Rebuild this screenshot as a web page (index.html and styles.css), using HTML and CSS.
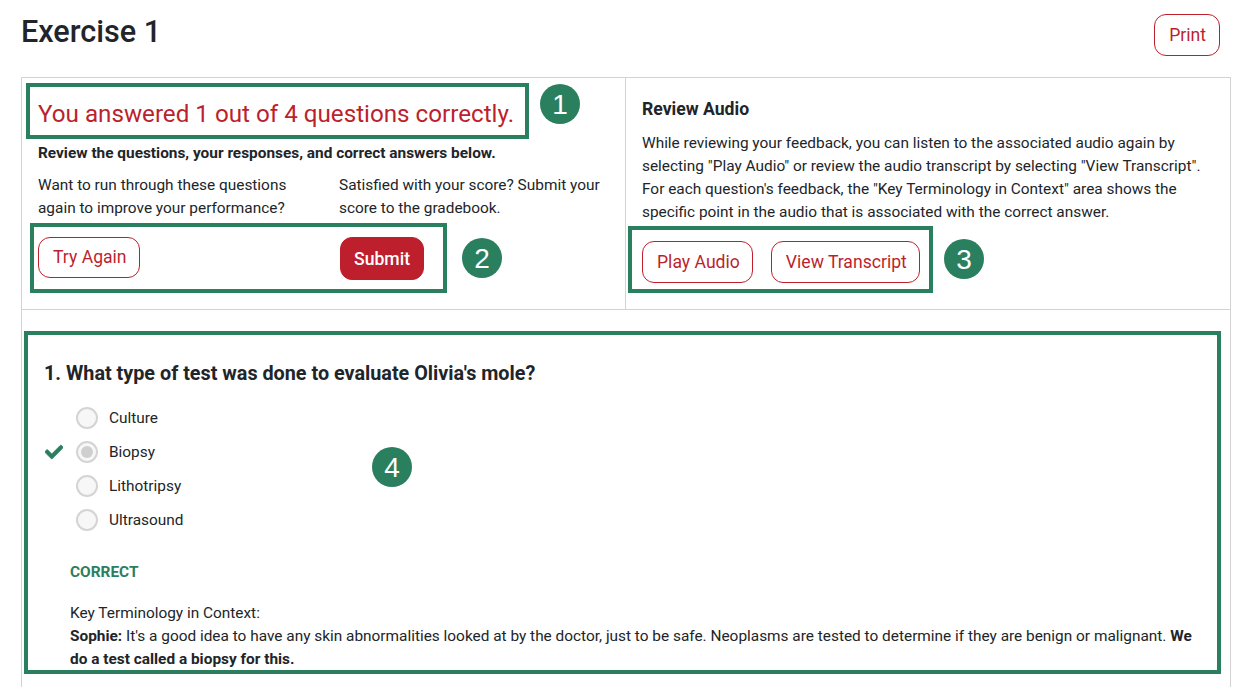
FILE: index.html
```html
<!DOCTYPE html>
<html lang="en">
  <head>
    <meta charset="UTF-8" />
    <meta name="viewport" content="width=device-width, initial-scale=1.0" />
    <title>Exercise 1</title>
    <link rel="stylesheet" href="styles.css">
  </head>
  <body>
    <div class="page">
      <div class="page-header">
        <h1>Exercise 1</h1>
        <button class="btn btn-print">Print</button>
      </div>

      <div class="panel">
        <div class="summary">
          <div class="score-cell">
            <h2 class="score">You answered 1 out of 4 questions correctly.</h2>
            <p class="review-note">Review the questions, your responses, and correct answers below.</p>
            <div class="choices">
              <div class="choice">
                <p>Want to run through these questions again to improve your performance?</p>
                <button class="btn btn-try">Try Again</button>
              </div>
              <div class="choice">
                <p>Satisfied with your score? Submit your score to the gradebook.</p>
                <button class="btn btn-solid">Submit</button>
              </div>
            </div>
          </div>
          <div class="audio-cell">
            <h3>Review Audio</h3>
            <p>While reviewing your feedback, you can listen to the associated audio again by selecting "Play Audio" or review the audio transcript by selecting "View Transcript". For each question's feedback, the "Key Terminology in Context" area shows the specific point in the audio that is associated with the correct answer.</p>
            <div class="audio-buttons">
              <button class="btn">Play Audio</button>
              <button class="btn">View Transcript</button>
            </div>
          </div>
        </div>

        <div class="question">
          <h3>1. What type of test was done to evaluate Olivia's mole?</h3>
          <ul class="options">
            <li><span class="radio"></span>Culture</li>
            <li>
              <svg class="check" viewBox="0 0 512 512"><path d="M173.898 439.404l-166.4-166.4c-9.997-9.997-9.997-26.206 0-36.204l36.203-36.204c9.997-9.998 26.207-9.998 36.204 0L192 312.69 432.095 72.596c9.997-9.997 26.207-9.997 36.204 0l36.203 36.204c9.997 9.997 9.997 26.206 0 36.204l-294.4 294.401c-9.998 9.997-26.207 9.997-36.204-.001z"/></svg>
              <span class="radio radio-on"></span>Biopsy
            </li>
            <li><span class="radio"></span>Lithotripsy</li>
            <li><span class="radio"></span>Ultrasound</li>
          </ul>
          <div class="feedback">
            <div class="correct">CORRECT</div>
            <p>Key Terminology in Context:<br><b>Sophie:</b> It's a good idea to have any skin abnormalities looked at by the doctor, just to be safe. Neoplasms are tested to determine if they are benign or malignant. <b>We do a test called a biopsy for this.</b></p>
          </div>
        </div>
      </div>

      <!-- callouts drawn on top of the screenshot -->
      <div class="callout callout-1"></div>
      <div class="callout callout-2"></div>
      <div class="callout callout-3"></div>
      <div class="callout callout-4"></div>
      <div class="badge badge-1">1</div>
      <div class="badge badge-2">2</div>
      <div class="badge badge-3">3</div>
      <div class="badge badge-4">4</div>
    </div>
  </body>
</html>
```

FILE: styles.css
```css
* {
  box-sizing: border-box;
}

html,
body {
  margin: 0;
  height: 100%;
  overflow: hidden;
}

body {
  background: #fff;
  color: #212529;
  font-family: Roboto, 'Liberation Sans', sans-serif;
  font-size: 15.4px;
  line-height: 23px;
}

p {
  margin: 0;
}

.page {
  position: relative;
  height: 687px;
  padding: 14px 16px 0 21px;
  overflow: hidden;
}

.page-header {
  display: flex;
  justify-content: space-between;
  align-items: flex-start;
  padding-right: 11px;
  margin-bottom: 21px;
}

.page-header h1 {
  margin: 0;
  font-size: 30.6px;
  line-height: 36px;
  font-weight: 500;
}

.btn {
  height: 42px;
  padding: 0 12px 0 14px;
  background: #fff;
  color: #bd1f2d;
  border: 1px solid #bd1f2d;
  border-radius: 12px;
  font-family: inherit;
  font-size: 17.6px;
}

.btn-print {
  padding: 0 13px 0 14px;
}

.btn-solid {
  height: 43px;
  margin-left: 1px;
  padding: 0 13px;
  background: #bd1f2d;
  color: #fff;
  font-weight: 500;
}

.btn-try {
  height: 41px;
  padding-bottom: 2px;
}

.panel {
  border: 1px solid #d3d3d3;
  border-bottom: none;
  min-height: 640px;
}

.summary {
  display: grid;
  grid-template-columns: 603px 1fr;
  height: 232px;
  border-bottom: 1px solid #d3d3d3;
}

.score-cell {
  padding: 18px 16px 0;
}

.score {
  margin: 0 0 12px;
  font-size: 24.2px;
  line-height: 36px;
  font-weight: 400;
  color: #bd1f2d;
}

.review-note {
  font-weight: 700;
  margin-top: -2px;
  margin-bottom: 9px;
}

.choices {
  display: grid;
  grid-template-columns: 301px 1fr;
}

.choice p {
  margin-bottom: 17px;
}

.choice:first-child p {
  padding-right: 20px;
}

.audio-cell {
  padding: 20px 16px 0;
  border-left: 1px solid #d3d3d3;
}

.audio-cell h3 {
  margin: 0 0 12px;
  font-size: 17.6px;
  line-height: 22px;
  font-weight: 700;
}

.audio-buttons {
  display: flex;
  gap: 18px;
  margin-top: 17px;
}

.question {
  padding: 51px 22px 0;
}

.question h3 {
  margin: 0 0 14px;
  font-size: 19.8px;
  line-height: 26px;
  font-weight: 700;
}

.options {
  list-style: none;
  margin: 0 0 24px;
  padding: 0;
}

.options li {
  position: relative;
  display: flex;
  align-items: center;
  height: 34px;
  padding-left: 32px;
}

.radio {
  display: flex;
  justify-content: center;
  align-items: center;
  width: 22px;
  height: 22px;
  margin-right: 11px;
  background: #f7f7f7;
  border: 2px solid #d4d4d4;
  border-radius: 50%;
}

.radio-on::after {
  content: '';
  width: 12px;
  height: 12px;
  background: #cfcfcf;
  border-radius: 50%;
}

.check {
  position: absolute;
  left: 1px;
  top: 8px;
  width: 18px;
  height: 18px;
  fill: #2a7f5f;
  stroke: #2a7f5f;
  stroke-width: 24;
}

.feedback {
  padding-left: 26px;
}

.correct {
  color: #2a7f5f;
  font-weight: 700;
  margin-bottom: 18px;
}

.callout {
  position: absolute;
  border: 4px solid #2a7f5f;
}

.callout-1 {
  left: 26px;
  top: 83px;
  width: 503px;
  height: 56px;
}

.callout-2 {
  left: 30px;
  top: 223px;
  width: 417px;
  height: 70px;
}

.callout-3 {
  left: 628px;
  top: 226px;
  width: 305px;
  height: 67px;
}

.callout-4 {
  left: 24px;
  top: 331px;
  width: 1197px;
  height: 343px;
}

.badge {
  position: absolute;
  width: 40px;
  height: 40px;
  background: #2a7f5f;
  color: #fff;
  border-radius: 50%;
  font-family: 'Liberation Sans', sans-serif;
  font-size: 28px;
  line-height: 41px;
  text-align: center;
}

.badge-1 {
  left: 540px;
  top: 84px;
}

.badge-2 {
  left: 462px;
  top: 238px;
}

.badge-3 {
  left: 944px;
  top: 239px;
}

.badge-4 {
  left: 372px;
  top: 447px;
}
```
